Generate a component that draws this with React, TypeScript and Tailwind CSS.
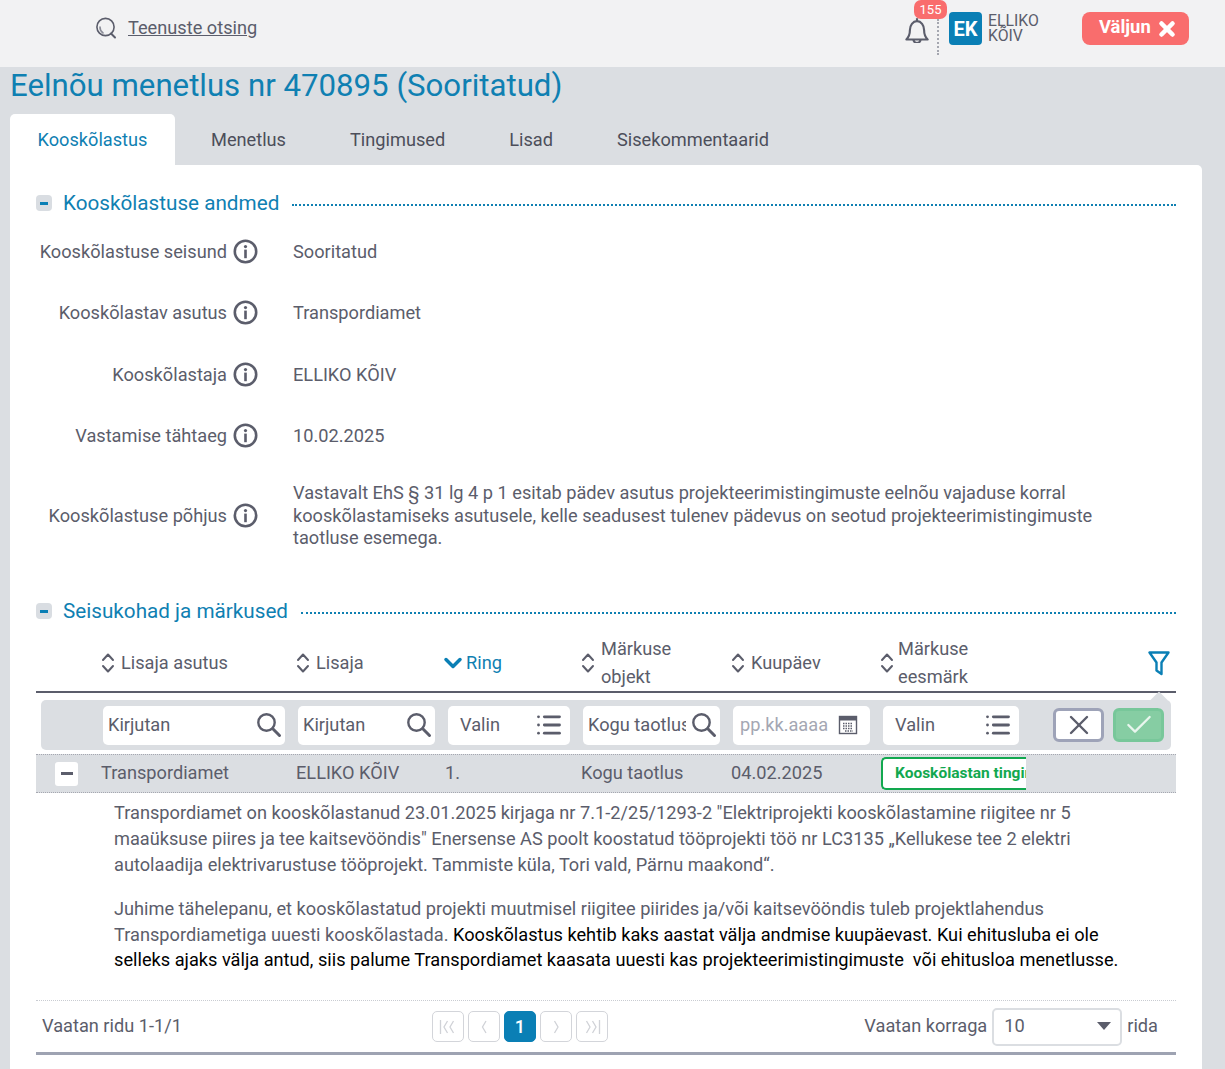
import React from 'react';
import { ChevronDown, List, X, Check } from 'lucide-react';

const fields = [
  { label: 'Kooskõlastuse seisund', value: 'Sooritatud', h: 'h-[61px]' },
  { label: 'Kooskõlastav asutus', value: 'Transpordiamet', h: 'h-[62px]' },
  { label: 'Kooskõlastaja', value: 'ELLIKO KÕIV', h: 'h-[61px]' },
  { label: 'Vastamise tähtaeg', value: '10.02.2025', h: 'h-[62px]' },
];

const tabs = ['Menetlus', 'Tingimused', 'Lisad', 'Sisekommentaarid'];

const gridCols = 'grid grid-cols-[65px_195px_149px_136px_150px_149px_146px_1fr]';

function InfoIcon() {
  return (
    <svg width="25" height="25" viewBox="0 0 25 25" fill="none" className="shrink-0 text-[#5b5d6b]">
      <circle cx="12.5" cy="12.5" r="10.7" stroke="currentColor" strokeWidth="2.6" />
      <circle cx="12.5" cy="7.6" r="1.6" fill="currentColor" />
      <rect x="11.2" y="10.6" width="2.6" height="8.6" fill="currentColor" />
    </svg>
  );
}

function SortIcon() {
  return (
    <svg width="14" height="22" viewBox="0 0 14 22" fill="none" stroke="#5b5d6b" strokeWidth="2" strokeLinecap="round" strokeLinejoin="round" className="shrink-0">
      <path d="M2 8l5-5.5L12 8" />
      <path d="M2 14l5 5.5 5-5.5" />
    </svg>
  );
}

function SearchIcon() {
  return (
    <svg width="26" height="26" viewBox="0 0 26 26" fill="none" stroke="#5b5d6b" strokeLinecap="round" className="ml-[5px] shrink-0">
      <circle cx="10.5" cy="10.5" r="8.2" strokeWidth="2.4" />
      <path d="M16.800 16.800l6.700 6.700" strokeWidth="3" />
    </svg>
  );
}

function SectionTitle({ title }: { title: string }) {
  return (
    <div className="flex items-center">
      <span className="flex h-[16px] w-[16px] items-center justify-center rounded-[4px] bg-[#d9dde2]">
        <span className="h-[3px] w-[8px] bg-[#0a7fb5]" />
      </span>
      <h2 className="ml-[11px] text-[20.7px] leading-[28px] text-[#0f80b2]">{title}</h2>
      <div className="ml-[13px] mt-[4px] flex-1 border-t-2 border-dotted border-[#0f80b2]" />
    </div>
  );
}

function HeaderCell({ lines, active, tight }: { lines: string[]; active?: boolean; tight?: boolean }) {
  return (
    <div className={`flex items-center ${active ? 'gap-0' : tight ? 'gap-[4px]' : 'gap-[6px]'}`}>
      {active ? <ChevronDown size={28} strokeWidth={3} className="-ml-[6px] -mr-[1px] text-[#0a7fb5]" /> : <SortIcon />}
      <div className={`text-[18.2px] leading-[28px] ${active ? 'text-[#0f80b2]' : 'text-[#5b5d6b]'}`}>
        {lines.map((l) => (
          <div key={l}>{l}</div>
        ))}
      </div>
    </div>
  );
}

function SearchInput({ width, text }: { width: string; text: string }) {
  return (
    <div className={`flex h-[39px] items-center overflow-hidden rounded-[5px] bg-white pl-[5px] pr-[3px] ${width}`}>
      <span className="flex-1 overflow-hidden whitespace-nowrap text-[18.2px] text-[#5b5d6b]">{text}</span>
      <SearchIcon />
    </div>
  );
}

function SelectInput({ width }: { width: string }) {
  return (
    <div className={`flex h-[39px] items-center justify-between rounded-[5px] bg-white pl-[12px] pr-[7px] ${width}`}>
      <span className="text-[18.2px] text-[#5b5d6b]">Valin</span>
      <List size={28} strokeWidth={2.4} className="text-[#5b5d6b]" />
    </div>
  );
}

function CalendarIcon() {
  return (
    <svg width="20" height="20" viewBox="0 0 20 20" fill="none" className="shrink-0">
      <rect x="1.500" y="1.500" width="17" height="17" stroke="#5b5d6b" strokeWidth="1.4" />
      <rect x="1.500" y="1.500" width="17" height="4" fill="#5b5d6b" />
      <path d="M5 8.500h10M5 11h10M5 13.500h10M7 16h8" stroke="#5b5d6b" strokeWidth="1.4" strokeDasharray="1.5 1" />
    </svg>
  );
}

function PageButton({ children, active }: { children: React.ReactNode; active?: boolean }) {
  return (
    <span
      className={`flex h-[31px] w-[32px] items-center justify-center rounded-[5px] border text-[18.2px] ${
        active ? 'border-[#0a7fb5] bg-[#0a7fb5] font-medium text-white' : 'border-[#d3d5da] bg-white'
      }`}
    >
      {children}
    </span>
  );
}

function PageArrow({ d }: { d: string }) {
  return (
    <svg width="20" height="18" viewBox="0 0 20 18" fill="none" stroke="#d0d2d7" strokeWidth="1.3">
      <path d={d} />
    </svg>
  );
}

export default function App() {
  return (
    <div className="h-[1069px] overflow-hidden bg-[#dbdee2] font-['Roboto',sans-serif] text-[#5b5d6b]">
      <header className="flex h-[67px] items-start bg-[#f2f2f3]">
        <div className="ml-[95px] mt-[15px] flex items-center">
          <svg width="22" height="24" viewBox="0 0 22 24" fill="none" stroke="#5b5d6b" strokeWidth="1.6" strokeLinecap="round">
            <circle cx="10.500" cy="11" r="8.600" />
            <path d="M8 17a7 7 0 0 1-3-6" stroke="#8a8c97" />
            <path d="M16 17.500l4 4" strokeWidth="2" />
          </svg>
          <a className="ml-[11px] text-[18.2px] leading-[26px] text-[#5b5d6b] underline">Teenuste otsing</a>
        </div>

        <div className="ml-auto flex items-start">
          <div className="relative h-[55px] w-[34px]">
            <svg width="24" height="26" viewBox="2 1 20 22" fill="none" stroke="#5b5d6b" strokeWidth="1.8" strokeLinejoin="round" className="absolute left-0 top-[17px]">
              <path d="M3 20c2-2 3-3.500 3-8 0-4 2.500-7.500 6-7.500s6 3.500 6 7.500c0 4.500 1 6 3 8z" />
              <path d="M12 2v2.500" />
              <path d="M14 20a3 3 0 0 0 6 0" transform="translate(-5 0)" />
            </svg>
            <span className="absolute left-[9px] top-0 h-[19px] w-[33px] rounded-[7px] bg-[#f96d6d] text-center text-[13px] leading-[19px] text-white">155</span>
            <span className="absolute left-[32px] top-[19px] h-[36px] border-l-2 border-dotted border-[#a5a7b0]" />
          </div>
          <div className="ml-[10px] mt-[12px] flex h-[33px] w-[33px] items-center justify-center rounded-[4px] bg-[#0a7fb5] text-[20px] font-bold text-white">EK</div>
          <div className="ml-[6px] mt-[14px] w-[94px] text-[15.8px] leading-[14.500px] text-[#5b5d6b]">
            <div>ELLIKO</div>
            <div>KÕIV</div>
          </div>
          <button className="mr-[36px] mt-[12px] flex h-[33px] w-[107px] items-center rounded-[8px] bg-[#f96d6d] pb-[3px] pl-[17px] text-[18.4px] font-bold text-white">
            Väljun
            <X size={22} strokeWidth={5} className="ml-[5px] mt-[3px]" />
          </button>
        </div>
      </header>

      <div className="px-[10px]">
        <h1 className="mt-[1px] text-[31.2px] leading-[36px] text-[#0f80b2]">Eelnõu menetlus nr 470895 (Sooritatud)</h1>

        <nav className="mt-[10px] flex h-[51px] items-stretch text-[18.2px]">
          <div className="flex w-[165px] items-center justify-center rounded-t-[5px] bg-white text-[#0f80b2]">Kooskõlastus</div>
          <div className="flex items-center gap-[64px] pl-[36px] text-[#4c4e5a]">
            {tabs.map((t) => (
              <span key={t}>{t}</span>
            ))}
          </div>
        </nav>

        <main className="h-[904px] w-[1192px] rounded-tr-[5px] bg-white px-[26px] pt-[24px]">
          <SectionTitle title="Kooskõlastuse andmed" />

          <div className="mt-[4px] text-[18.2px]">
            {fields.map((f) => (
              <div key={f.label} className={`flex items-center ${f.h}`}>
                <div className="flex w-[222px] items-center justify-end gap-[6px]">
                  <span>{f.label}</span>
                  <InfoIcon />
                </div>
                <div className="ml-[35px]">{f.value}</div>
              </div>
            ))}
            <div className="flex h-[98px] items-center">
              <div className="flex w-[222px] items-center justify-end gap-[6px]">
                <span>Kooskõlastuse põhjus</span>
                <InfoIcon />
              </div>
              <div className="ml-[35px] w-[830px] leading-[22.500px]">
                Vastavalt EhS § 31 lg 4 p 1 esitab pädev asutus projekteerimistingimuste eelnõu vajaduse korral kooskõlastamiseks asutusele, kelle seadusest tulenev pädevus on seotud projekteerimistingimuste taotluse esemega.
              </div>
            </div>
          </div>

          <div className="mt-[32px]">
            <SectionTitle title="Seisukohad ja märkused" />
          </div>

          <div className={`${gridCols} mt-[10px] h-[58px] items-center border-b-2 border-[#5b5d6b] pb-[3px]`}>
            <div />
            <HeaderCell lines={['Lisaja asutus']} />
            <HeaderCell lines={['Lisaja']} />
            <HeaderCell lines={['Ring']} active />
            <HeaderCell lines={['Märkuse', 'objekt']} />
            <HeaderCell lines={['Kuupäev']} />
            <HeaderCell lines={['Märkuse', 'eesmärk']} tight />
            <div className="flex justify-end pr-[6px]">
              <svg width="22" height="25" viewBox="0 0 22 25" fill="none" stroke="#0a7fb5" strokeWidth="2.4" strokeLinejoin="round">
                <path d="M1.500 1.500h19L13.500 11.500V23L8.500 19.500v-8z" />
              </svg>
            </div>
          </div>

          <div className="relative mx-[5px] mt-[7px] flex h-[50px] items-center rounded-[5px] bg-[#dbdee2] pl-[62px]">
            <span className="absolute right-[6px] -top-[6px] h-[12px] w-[12px] rotate-45 bg-[#dbdee2]" />
            <div className="flex gap-[13px]">
              <SearchInput width="w-[182px]" text="Kirjutan" />
              <SearchInput width="w-[137px]" text="Kirjutan" />
              <SelectInput width="w-[122px]" />
              <SearchInput width="w-[137px]" text="Kogu taotlus" />
              <div className="flex h-[39px] w-[137px] items-center justify-between rounded-[5px] bg-white pl-[7px] pr-[12px]">
                <span className="text-[18.2px] text-[#a4a7b3]">pp.kk.aaaa</span>
                <CalendarIcon />
              </div>
              <SelectInput width="w-[136px]" />
            </div>
            <button className="ml-[34px] flex h-[34px] w-[51px] items-center justify-center rounded-[6px] border-[3px] border-[#9ea3b8] bg-white">
              <X size={32} strokeWidth={1.8} className="text-[#5b5d6b]" />
            </button>
            <button className="ml-[9px] flex h-[34px] w-[51px] items-center justify-center rounded-[6px] border-[3px] border-[#78c79a] bg-[#86cda3]">
              <Check size={32} strokeWidth={1.7} className="text-[#e9f6ee]" />
            </button>
          </div>

          <div className={`${gridCols} mt-[4px] h-[39px] items-center border-y border-dotted border-[#a5a7b0] bg-[#dbdee2] text-[18.2px]`}>
            <div className="pl-[19px]">
              <span className="flex h-[24px] w-[23px] items-center justify-center rounded-[3px] bg-white">
                <span className="h-[3px] w-[12px] bg-[#5b5d6b]" />
              </span>
            </div>
            <div className="pb-[2px]">Transpordiamet</div>
            <div className="pb-[2px]">ELLIKO KÕIV</div>
            <div className="pb-[2px]">1.</div>
            <div className="pb-[2px]">Kogu taotlus</div>
            <div className="pb-[2px]">04.02.2025</div>
            <div className="pl-[1px]">
              <div className="flex h-[33px] w-[145px] items-center overflow-hidden whitespace-nowrap rounded-l-[5px] border-y-2 border-l-2 border-[#12a84f] bg-white pl-[12px] text-[15.500px] font-bold text-[#12a84f]">
                Kooskõlastan tingimustega
              </div>
            </div>
            <div />
          </div>

          <div className="ml-[78px] mt-[7px] w-[1030px] text-[18.2px] leading-[26px]">
            <p>
              Transpordiamet on kooskõlastanud 23.01.2025 kirjaga nr 7.1-2/25/1293-2 "Elektriprojekti kooskõlastamine riigitee nr 5 maaüksuse piires ja tee kaitsevööndis" Enersense AS poolt koostatud tööprojekti töö nr LC3135 „Kellukese tee 2 elektri autolaadija elektrivarustuse tööprojekt. Tammiste küla, Tori vald, Pärnu maakond“.
            </p>
            <p className="mt-[18px] leading-[25.5px]">
              Juhime tähelepanu, et kooskõlastatud projekti muutmisel riigitee piirides ja/või kaitsevööndis tuleb projektlahendus Transpordiametiga uuesti kooskõlastada. <span className="text-black">Kooskõlastus kehtib kaks aastat välja andmise kuupäevast. Kui ehitusluba ei ole selleks ajaks välja antud, siis palume Transpordiamet kaasata uuesti kas projekteerimistingimuste&nbsp; või ehitusloa menetlusse.</span>
            </p>
          </div>

          <div className="mt-[27.5px] flex h-[55px] items-center border-b-[3px] border-t border-b-[#9ea3b2] border-t-[#c9ccd2] [border-top-style:dotted] pl-[6px] text-[18.2px]">
            <span className="w-[390px] pb-[2px]">Vaatan ridu 1-1/1</span>
            <div className="flex gap-[4px]">
              <PageButton><PageArrow d="M2.500 2v14M9.500 3L6 9l3.500 6M15.500 3L12 9l3.500 6" /></PageButton>
              <PageButton><PageArrow d="M12 3L8.500 9l3.500 6" /></PageButton>
              <PageButton active>1</PageButton>
              <PageButton><PageArrow d="M8.500 3L12 9l-3.500 6" /></PageButton>
              <PageButton><PageArrow d="M17.500 2v14M10.500 3L14 9l-3.500 6M4.500 3L8 9l-3.500 6" /></PageButton>
            </div>
            <span className="ml-auto pb-[2px]">Vaatan korraga</span>
            <div className="ml-[5px] flex h-[38px] w-[130px] items-center justify-between rounded-[5px] border-2 border-[#dbdee2] pb-[2px] pl-[10px] pr-[9px]">
              <span>10</span>
              <span className="h-0 w-0 border-x-[7px] border-t-[8px] border-x-transparent border-t-[#5b5d6b]" />
            </div>
            <span className="ml-[5px] mr-[18px] pb-[2px]">rida</span>
          </div>
        </main>
      </div>
    </div>
  );
}
